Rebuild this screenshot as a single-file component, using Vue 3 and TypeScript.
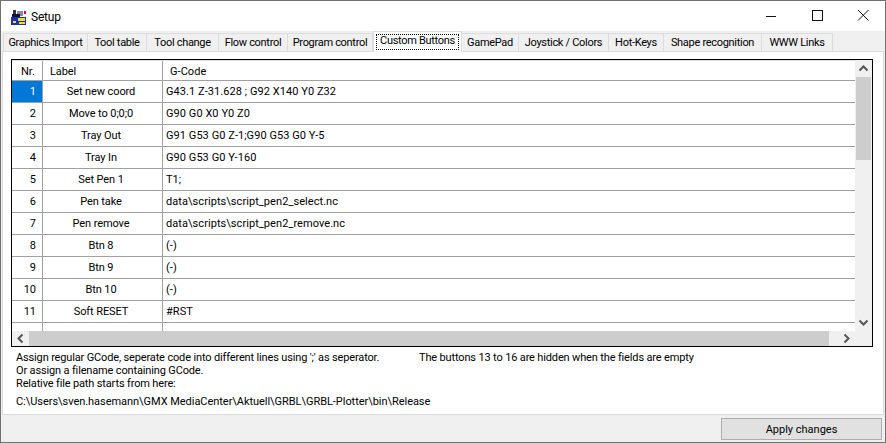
<script setup lang="ts">
const tabs = [
  { label: 'Graphics Import', w: 85 },
  { label: 'Tool table', w: 59 },
  { label: 'Tool change', w: 72 },
  { label: 'Flow control', w: 69 },
  { label: 'Program control', w: 85 },
  { label: 'Custom Buttons', w: 89, active: true },
  { label: 'GamePad', w: 57 },
  { label: 'Joystick / Colors', w: 90 },
  { label: 'Hot-Keys', w: 55 },
  { label: 'Shape recognition', w: 98 },
  { label: 'WWW Links', w: 71 },
]
const rows = [
  ['Set new coord', 'G43.1 Z-31.628 ; G92 X140 Y0 Z32'],
  ['Move to 0;0;0', 'G90 G0 X0 Y0 Z0'],
  ['Tray Out', 'G91 G53 G0 Z-1;G90 G53 G0 Y-5'],
  ['Tray In', 'G90 G53 G0 Y-160'],
  ['Set Pen 1', 'T1;'],
  ['Pen take', 'data\\scripts\\script_pen2_select.nc'],
  ['Pen remove', 'data\\scripts\\script_pen2_remove.nc'],
  ['Btn 8', '(-)'],
  ['Btn 9', '(-)'],
  ['Btn 10', '(-)'],
  ['Soft RESET', '#RST'],
]
</script>

<template>
  <div class="window">
    <header class="titlebar">
      <svg class="app-icon" width="17" height="16" viewBox="0 0 17 16">
        <rect x="3" y="1" width="3" height="5" fill="#333" />
        <rect x="7" y="2" width="6" height="5" fill="#8a8a9a" />
        <rect x="14" y="2" width="2" height="3" fill="#e01020" />
        <rect x="2" y="5" width="8" height="4" fill="#101030" />
        <rect x="1" y="8" width="15" height="8" fill="#1c2fb0" />
        <rect x="8" y="9" width="7" height="3" fill="#f5e020" />
        <rect x="3" y="12" width="3" height="2" fill="#f5e020" />
        <rect x="9" y="13" width="6" height="2" fill="#f5e020" />
      </svg>
      <span class="title">Setup</span>
      <div class="controls">
        <svg class="ctl" width="46" height="31" viewBox="0 0 46 31"><path d="M18 16.5h10" stroke="#111" fill="none" /></svg>
        <svg class="ctl" width="46" height="31" viewBox="0 0 46 31"><rect x="18.5" y="10.5" width="10" height="10" stroke="#111" fill="none" /></svg>
        <svg class="ctl" width="46" height="31" viewBox="0 0 46 31"><path d="M18 10l10.500 10.500M28.500 10L18 20.500" stroke="#111" fill="none" /></svg>
      </div>
    </header>

    <main class="form">
      <nav class="tabs">
        <div
          v-for="t in tabs"
          :key="t.label"
          class="tab"
          :class="{ active: t.active }"
          :style="{ width: t.w + 'px' }"
        >
          <span class="tab-text">{{ t.label }}</span>
        </div>
      </nav>

      <section class="page">
        <div class="grid">
          <div class="grid-main">
            <div class="cells">
              <div class="row head">
                <div class="c nr">Nr.</div>
                <div class="c lbl">Label</div>
                <div class="c code">G-Code</div>
              </div>
              <div v-for="(r, i) in rows" :key="i" class="row">
                <div class="c nr" :class="{ sel: i === 0 }">{{ i + 1 }}</div>
                <div class="c lbl">{{ r[0] }}</div>
                <div class="c code">{{ r[1] }}</div>
              </div>
              <div class="row partial">
                <div class="c nr"></div>
                <div class="c lbl"></div>
                <div class="c code"></div>
              </div>
            </div>
            <div class="vscroll">
              <svg class="arrow" width="15" height="17" viewBox="0 0 15 17"><path d="M3.500 10.500l4-4 4 4" stroke="#555" stroke-width="2" fill="none" /></svg>
              <div class="vtrack"><div class="vthumb"></div></div>
              <svg class="arrow" width="15" height="17" viewBox="0 0 15 17"><path d="M3.500 6.500l4 4 4-4" stroke="#555" stroke-width="2" fill="none" /></svg>
            </div>
          </div>
          <div class="hscroll">
            <svg class="arrow" width="17" height="15" viewBox="0 0 17 15"><path d="M10.500 3.500l-4 4 4 4" stroke="#555" stroke-width="2" fill="none" /></svg>
            <div class="hthumb"></div>
            <svg class="arrow" width="17" height="15" viewBox="0 0 17 15"><path d="M6.500 3.500l4 4-4 4" stroke="#555" stroke-width="2" fill="none" /></svg>
            <div class="corner"></div>
          </div>
        </div>

        <div class="notes">
          <div class="note-col">
            <div class="note">Assign regular GCode, seperate code into different lines using ';' as seperator.</div>
            <div class="note">Or assign a filename containing GCode.</div>
            <div class="note">Relative file path starts from here:</div>
          </div>
          <div class="note">The buttons 13 to 16 are hidden when the fields are empty</div>
        </div>
        <div class="path">C:\Users\sven.hasemann\GMX MediaCenter\Aktuell\GRBL\GRBL-Plotter\bin\Release</div>
      </section>

      <footer class="actions">
        <button class="apply" type="button">Apply changes</button>
      </footer>
    </main>
  </div>
</template>

<style>
html, body { margin: 0; padding: 0; background: #fff; }
</style>

<style scoped>
.window {
  width: 886px;
  height: 443px;
  box-sizing: border-box;
  border: 1px solid #707070;
  display: flex;
  flex-direction: column;
  font-family: Roboto, "Noto Sans", sans-serif;
  font-size: 11px;
  color: #000;
  overflow: hidden;
  background: #f0f0f0;
}
.titlebar {
  height: 30px;
  flex: none;
  background: #fff;
  display: flex;
  align-items: center;
  padding-left: 9px;
}
.app-icon { margin-right: 4px; margin-top: 1px; }
.title { font-size: 12px; margin-top: 1px; letter-spacing: -0.2px; }
.controls { margin-left: auto; display: flex; margin-right: -1px; }
.ctl { display: block; margin-top: -1px; }
.form { flex: 1; display: flex; flex-direction: column; min-height: 0; }
.tabs {
  display: flex;
  height: 20px;
  padding-left: 2px;
  flex: none;
  align-items: flex-end;
  position: relative;
  z-index: 1;
}
.tab {
  height: 18px;
  box-sizing: border-box;
  border: 1px solid #dcdcdc;
  border-bottom: none;
  border-left: none;
  background: #f0f0f0;
  display: flex;
  align-items: center;
  justify-content: center;
  white-space: nowrap;
  line-height: 16px;
  letter-spacing: -0.3px;
}
.tab:first-child { border-left: 1px solid #dcdcdc; }
.tab.active {
  height: 21px;
  margin-bottom: -1px;
  background: #fff;
  border-left: 1px solid #dcdcdc;
  padding: 2px;
  align-items: stretch;
}
.tab.active .tab-text {
  flex: 1;
  text-align: center;
  outline: 1px dotted #000;
  outline-offset: -1px;
  line-height: 14px;
}
.page {
  flex: 1;
  margin: 0 1px;
  min-height: 0;
  box-sizing: border-box;
  background: #fff;
  border: 1px solid #dcdcdc;
  padding: 7px 10px 0 8px;
}
.grid {
  height: 288px;
  box-sizing: border-box;
  border: 1px solid #000;
  display: flex;
  flex-direction: column;
  background: #fff;
}
.grid-main { flex: 1; display: flex; min-height: 0; }
.cells { flex: 1; overflow: hidden; min-width: 0; }
.row {
  display: flex;
  height: 22px;
  box-sizing: border-box;
  border-bottom: 1px solid #a0a0a0;
}
.row.head { height: 21px; border-top: 1px solid #e0e0e0; }
.row.head .c { line-height: 21px; }
.row.partial { border-bottom: none; }
.c {
  box-sizing: border-box;
  border-right: 1px solid #a0a0a0;
  line-height: 22px;
  white-space: nowrap;
}
.nr { width: 31px; text-align: right; padding-right: 6px; }
.lbl { width: 120px; text-align: center; letter-spacing: -0.1px; padding-right: 3px; }
.code { flex: 1; border-right: none; padding-left: 3px; letter-spacing: 0.06px; }
.head .nr { text-align: left; padding: 0 0 0 9px; }
.head .lbl { text-align: left; padding-left: 7px; }
.head .code { padding-left: 7px; }
.sel { background: #0078d7; color: #fff; }
.vscroll {
  width: 17px;
  flex: none;
  background: #f0f0f0;
  display: flex;
  flex-direction: column;
  align-items: center;
}
.arrow { display: block; flex: none; }
.vtrack { flex: 1; width: 100%; display: flex; justify-content: center; }
.vthumb { width: 15px; height: 83px; background: #cdcdcd; }
.hscroll {
  height: 15px;
  flex: none;
  background: #f0f0f0;
  display: flex;
  align-items: center;
}
.hthumb { width: 800px; height: 15px; background: #cdcdcd; }
.hscroll .arrow { margin: 0; }
.hscroll .arrow:last-of-type { margin-left: 9px; }
.corner { flex: 1; }
.notes { display: flex; margin-top: 4px; padding-left: 5px; letter-spacing: -0.15px; }
.note-col { width: 403px; flex: none; }
.note { line-height: 13px; white-space: nowrap; }
.path { margin-top: 5px; padding-left: 5px; line-height: 13px; white-space: nowrap; letter-spacing: -0.04px; }
.actions {
  height: 27px;
  flex: none;
  display: flex;
  justify-content: flex-end;
  align-items: center;
  padding-right: 3px;
}
.apply {
  width: 161px;
  height: 22px;
  box-sizing: border-box;
  border: 1px solid #adadad;
  background: #e1e1e1;
  font: inherit;
  color: #000;
  padding: 0;
  margin-top: 1px;
}
</style>
